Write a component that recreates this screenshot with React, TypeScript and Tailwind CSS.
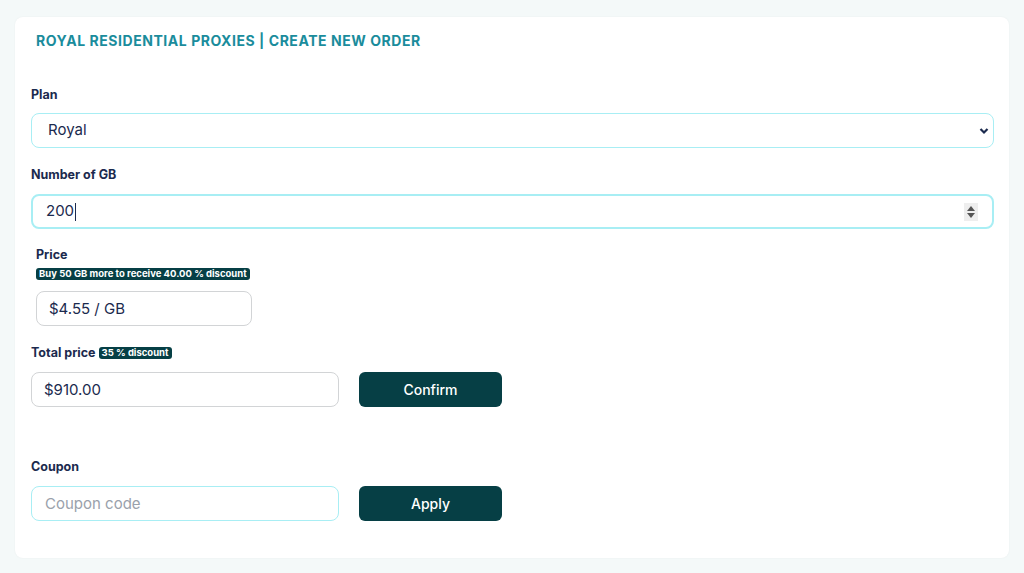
import React, { useState } from "react";

const font = { fontFamily: "Inter, 'Noto Sans', sans-serif" };

const Label = ({ children }: { children: React.ReactNode }) => (
  <div className="text-[12.5px] font-bold text-[#1b2a4e] leading-[12px]">{children}</div>
);

const Badge = ({ text }: { text: string }) => (
  <span className="inline-block rounded-[3px] bg-[#063f45] px-[3px] text-[9.5px] font-bold leading-[12px] text-white">
    {text}
  </span>
);

const App = () => {
  const [plan, setPlan] = useState("Royal");
  const [coupon, setCoupon] = useState("");

  return (
    <div style={font} className="min-h-[573px] bg-[#f4f9f9] px-[15px] pt-[17px] pb-[16px]">
      <div className="rounded-[8px] bg-white pl-[16px] pr-[15px] pt-[15px] pb-[37px] shadow-[0_0_2px_rgba(0,0,0,0.05)]">
        <h1 className="pl-[5px] text-[14px] font-bold leading-[17px] tracking-[0.55px] text-[#1a8c9c]">
          ROYAL RESIDENTIAL PROXIES | CREATE NEW ORDER
        </h1>

        <div className="mt-[40px]">
          <Label>Plan</Label>
          <div className="relative mt-[12px]">
            <select
              value={plan}
              onChange={(e) => setPlan(e.target.value)}
              className="block h-[35px] w-full appearance-none rounded-[8px] border border-[#a8eef4] bg-white pl-[16px] text-[15px] text-[#1b2a4e] outline-none"
            >
              <option>Royal</option>
              <option>Premium</option>
            </select>
            <svg className="pointer-events-none absolute right-[5px] top-[14px]" width="10" height="8" viewBox="0 0 10 8">
              <path d="M1.5 2 L5 5.5 L8.5 2" fill="none" stroke="#1b2a4e" strokeWidth="2.2" />
            </svg>
          </div>
        </div>

        <div className="mt-[21px]">
          <Label>Number of GB</Label>
          <div className="relative mt-[13px] flex h-[35px] items-center rounded-[8px] border-2 border-[#a8eef4] pl-[13px] text-[15px] text-[#1b2a4e]">
            <span>200</span>
            <span className="ml-[1px] inline-block h-[18px] w-[1px] bg-[#1b2a4e]" />
            <div className="absolute right-[14px] top-[7px] flex h-[18px] w-[14px] flex-col items-center justify-center gap-[2px] bg-[#eeeeee]">
              <svg width="8" height="5" viewBox="0 0 8 5"><path d="M4 0 L8 5 L0 5 Z" fill="#555" /></svg>
              <svg width="8" height="5" viewBox="0 0 8 5"><path d="M0 0 L8 0 L4 5 Z" fill="#555" /></svg>
            </div>
          </div>
        </div>

        <div className="mt-[20px] pl-[5px]">
          <Label>Price</Label>
          <div className="mt-[7px] flex leading-none">
            <Badge text="Buy 50 GB more to receive 40.00 % discount" />
          </div>
          <input
            readOnly
            value="$4.55 / GB"
            className="mt-[11px] block h-[35px] w-[216px] rounded-[8px] border border-[#d2d4d6] pl-[12px] text-[15px] text-[#1b2a4e] outline-none"
          />
        </div>

        <div className="mt-[21px]">
          <div className="flex items-center gap-[3px]">
            <Label>Total price</Label>
            <Badge text="35 % discount" />
          </div>
          <div className="mt-[13px] flex items-center gap-[20px]">
            <input
              readOnly
              value="$910.00"
              className="h-[35px] w-[308px] rounded-[8px] border border-[#d2d4d6] pl-[12px] text-[15px] text-[#1b2a4e] outline-none"
            />
            <button className="h-[35px] w-[143px] rounded-[6px] bg-[#063f45] text-[14px] font-medium text-white">
              Confirm
            </button>
          </div>
        </div>

        <div className="mt-[54px]">
          <Label>Coupon</Label>
          <div className="mt-[13px] flex items-center gap-[20px]">
            <input
              value={coupon}
              onChange={(e) => setCoupon(e.target.value)}
              placeholder="Coupon code"
              className="h-[35px] w-[308px] rounded-[8px] border border-[#a8eef4] pl-[13px] text-[15px] text-[#1b2a4e] outline-none placeholder:text-[#9aa1ab]"
            />
            <button className="h-[35px] w-[143px] rounded-[6px] bg-[#063f45] text-[14px] font-medium text-white">
              Apply
            </button>
          </div>
        </div>
      </div>
    </div>
  );
};

export default App;
